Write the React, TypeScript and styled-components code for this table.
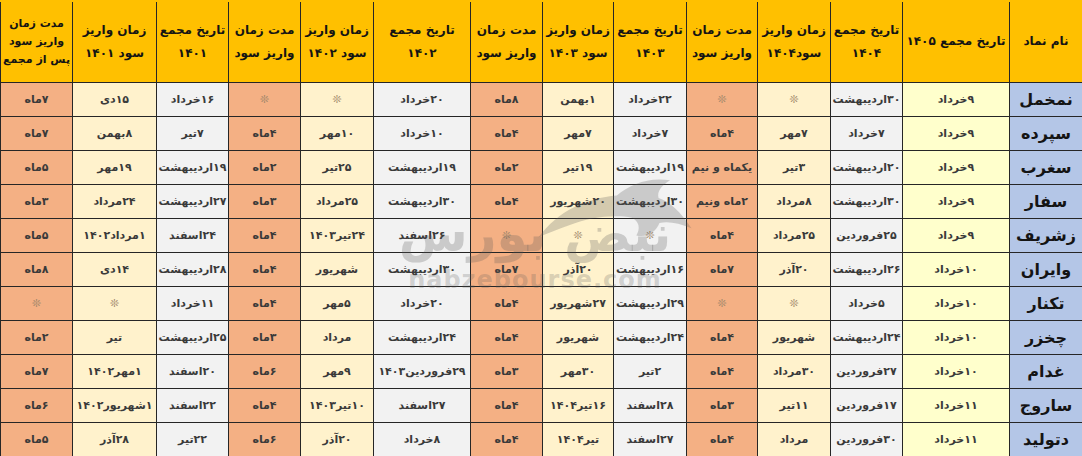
import styled, { createGlobalStyle } from "styled-components";

type Tone = "head" | "name" | "y1405" | "date" | "pay" | "dur";

const GlobalStyle = createGlobalStyle`
  html, body {
    margin: 0;
    padding: 0;
    background: #ffffff;
  }
  body {
    font-family: "DejaVu Sans", "Noto Sans", sans-serif;
  }
`;

const tones: Record<Tone, string> = {
  head: "#ffc000",
  name: "#b4c6e7",
  y1405: "#ffffcc",
  date: "#f2f2f2",
  pay: "#fff2cc",
  dur: "#f4b084",
};

const widths = [73, 107, 72, 73, 71, 73, 71, 72, 97, 73, 72, 72, 84, 72];
const colTones: Tone[] = [
  "name",
  "y1405",
  "date",
  "pay",
  "dur",
  "date",
  "pay",
  "dur",
  "date",
  "pay",
  "dur",
  "date",
  "pay",
  "dur",
];

const headers: string[][] = [
  ["نام نماد"],
  ["تاریخ مجمع ۱۴۰۵"],
  ["تاریخ مجمع", "۱۴۰۴"],
  ["زمان واریز", "سود۱۴۰۴"],
  ["مدت زمان", "واریز سود"],
  ["تاریخ مجمع", "۱۴۰۳"],
  ["زمان واریز", "سود ۱۴۰۳"],
  ["مدت زمان", "واریز سود"],
  ["تاریخ مجمع", "۱۴۰۲"],
  ["زمان واریز", "سود ۱۴۰۲"],
  ["مدت زمان", "واریز سود"],
  ["تاریخ مجمع", "۱۴۰۱"],
  ["زمان واریز", "سود ۱۴۰۱"],
  ["مدت زمان", "واریز سود", "پس از مجمع"],
];

const S = "❊";

const rows: string[][] = [
  ["نمخمل", "۹خرداد", "۳۰اردیبهشت", S, S, "۲۲خرداد", "۱بهمن", "۸ماه", "۲۰خرداد", S, S, "۱۶خرداد", "۱۵دی", "۷ماه"],
  ["سپرده", "۹خرداد", "۷خرداد", "۷مهر", "۴ماه", "۷خرداد", "۷مهر", "۴ماه", "۱۰خرداد", "۱۰مهر", "۴ماه", "۷تیر", "۸بهمن", "۷ماه"],
  ["سغرب", "۹خرداد", "۲۰اردیبهشت", "۳تیر", "یکماه و نیم", "۱۹اردیبهشت", "۱۹تیر", "۲ماه", "۱۹اردیبهشت", "۲۵تیر", "۲ماه", "۱۹اردیبهشت", "۱۹مهر", "۵ماه"],
  ["سفار", "۹خرداد", "۳۰اردیبهشت", "۸مرداد", "۲ماه ونیم", "۳۰اردیبهشت", "۲۰شهریور", "۴ماه", "۳۰اردیبهشت", "۲۵مرداد", "۳ماه", "۲۷اردیبهشت", "۲۴مرداد", "۳ماه"],
  ["زشریف", "۹خرداد", "۲۵فروردین", "۲۵مرداد", "۴ماه", S, S, S, "۲۶اسفند", "۲۴تیر۱۴۰۳", "۴ماه", "۲۴اسفند", "۱مرداد۱۴۰۲", "۵ماه"],
  ["وایران", "۱۰خرداد", "۲۶اردیبهشت", "۲۰آذر", "۷ماه", "۱۶اردیبهشت", "۲۰آذر", "۷ماه", "۳۰اردیبهشت", "شهریور", "۴ماه", "۲۸اردیبهشت", "۱۴دی", "۸ماه"],
  ["تکنار", "۱۰خرداد", "۵خرداد", S, S, "۲۹اردیبهشت", "۲۷شهریور", "۴ماه", "۲۰خرداد", "۵مهر", "۴ماه", "۱۱خرداد", S, S],
  ["چخزر", "۱۰خرداد", "۲۴اردیبهشت", "شهریور", "۴ماه", "۲۴اردیبهشت", "شهریور", "۴ماه", "۲۴اردیبهشت", "مرداد", "۳ماه", "۲۵اردیبهشت", "تیر", "۲ماه"],
  ["غدام", "۱۰خرداد", "۲۷فروردین", "۳۰مرداد", "۴ماه", "۲تیر", "۳۰مهر", "۳ماه", "۲۹فروردین۱۴۰۳", "۹مهر", "۶ماه", "۲۰اسفند", "۱مهر۱۴۰۲", "۷ماه"],
  ["ساروج", "۱۱خرداد", "۱۷فروردین", "۱۱تیر", "۳ماه", "۲۸اسفند", "۱۶تیر۱۴۰۴", "۴ماه", "۲۷اسفند", "۱۰تیر۱۴۰۳", "۴ماه", "۲۲اسفند", "۱شهریور۱۴۰۲", "۶ماه"],
  ["دتولید", "۱۱خرداد", "۳۰فروردین", "مرداد", "۴ماه", "۲۷اسفند", "تیر۱۴۰۴", "۴ماه", "۸خرداد", "۲۰آذر", "۶ماه", "۲۲تیر", "۲۸آذر", "۵ماه"],
];

const App = () => {
  return (
    <>
      <GlobalStyle />
      <Page>
        <Table>
          <colgroup>
            {widths.map((w, i) => (
              <col key={i} style={{ width: w }} />
            ))}
          </colgroup>
          <thead>
            <HeadRow>
              {headers.map((lines, i) => (
                <HeadCell key={i} $tight={lines.length > 2}>
                  {lines.map((l, j) => (
                    <div key={j}>{l}</div>
                  ))}
                </HeadCell>
              ))}
            </HeadRow>
          </thead>
          <tbody>
            {rows.map((row, r) => (
              <BodyRow key={r}>
                {row.map((val, c) =>
                  c === 0 ? (
                    <NameCell key={c}>{val}</NameCell>
                  ) : (
                    <Cell key={c} $tone={colTones[c]}>
                      {val === S ? <Star>{S}</Star> : val}
                    </Cell>
                  )
                )}
              </BodyRow>
            ))}
          </tbody>
        </Table>

        <Watermark>
          <Bull viewBox="0 0 180 80">
            <path d="M4 74 C26 44 58 30 92 27 C108 14 128 6 152 10 C142 16 137 23 139 30 C152 34 164 46 176 64 C162 58 150 56 140 58 C136 68 126 75 114 72 C119 64 117 56 109 52 C88 48 60 52 40 60 C26 65 14 70 4 74 Z" />
          </Bull>
          <LogoText>نبض بورس</LogoText>
          <Domain>nabzebourse.com</Domain>
        </Watermark>
      </Page>
    </>
  );
};

export default App;

const Page = styled.div`
  position: relative;
  width: 1082px;
  height: 456px;
  overflow: hidden;
  background: #ffffff;
`;

const Table = styled.table`
  direction: rtl;
  width: 1082px;
  table-layout: fixed;
  border-collapse: collapse;
  font-family: "DejaVu Sans", sans-serif;
`;

const HeadRow = styled.tr`
  height: 81px;
`;

const BodyRow = styled.tr`
  height: 34px;
`;

const HeadCell = styled.th<{ $tight?: boolean }>`
  background: ${tones.head};
  border: 1px solid #262626;
  border-top: 2px solid #ffc000;
  padding: 0 1px;
  font-size: ${(p) => (p.$tight ? "11px" : "12px")};
  font-weight: bold;
  color: #141414;
  line-height: ${(p) => (p.$tight ? "18px" : "23px")};
  text-align: center;
  vertical-align: middle;
  white-space: nowrap;
`;

const Cell = styled.td<{ $tone: Tone }>`
  background: ${(p) => tones[p.$tone]};
  border: 1px solid #262626;
  padding: 0 1px;
  font-size: 11px;
  font-weight: bold;
  color: #3a3a3a;
  text-align: center;
  vertical-align: middle;
  white-space: nowrap;
  overflow: hidden;
`;

const NameCell = styled.td`
  background: ${tones.name};
  border: 1px solid #262626;
  padding: 0 2px;
  font-size: 16px;
  font-weight: bold;
  color: #141414;
  text-align: center;
  vertical-align: middle;
  white-space: nowrap;
`;

const Star = styled.span`
  font-size: 11px;
  color: #a0866a;
`;

const Watermark = styled.div`
  position: absolute;
  left: 375px;
  top: 170px;
  width: 320px;
  height: 140px;
  pointer-events: none;
  display: flex;
  flex-direction: column;
  align-items: center;
`;

const Bull = styled.svg`
  position: absolute;
  right: 0;
  top: 0;
  width: 160px;
  height: 74px;
  fill: rgba(90, 90, 90, 0.26);
`;

const LogoText = styled.div`
  margin-top: 28px;
  direction: rtl;
  white-space: nowrap;
  font-family: "DejaVu Sans", sans-serif;
  font-weight: bold;
  font-size: 50px;
  line-height: 72px;
  color: rgba(90, 90, 90, 0.26);
  letter-spacing: 2px;
`;

const Domain = styled.div`
  margin-top: -4px;
  white-space: nowrap;
  font-family: "DejaVu Sans", sans-serif;
  font-weight: bold;
  font-size: 24px;
  line-height: 28px;
  letter-spacing: 1px;
  color: rgba(90, 90, 90, 0.24);
`;
